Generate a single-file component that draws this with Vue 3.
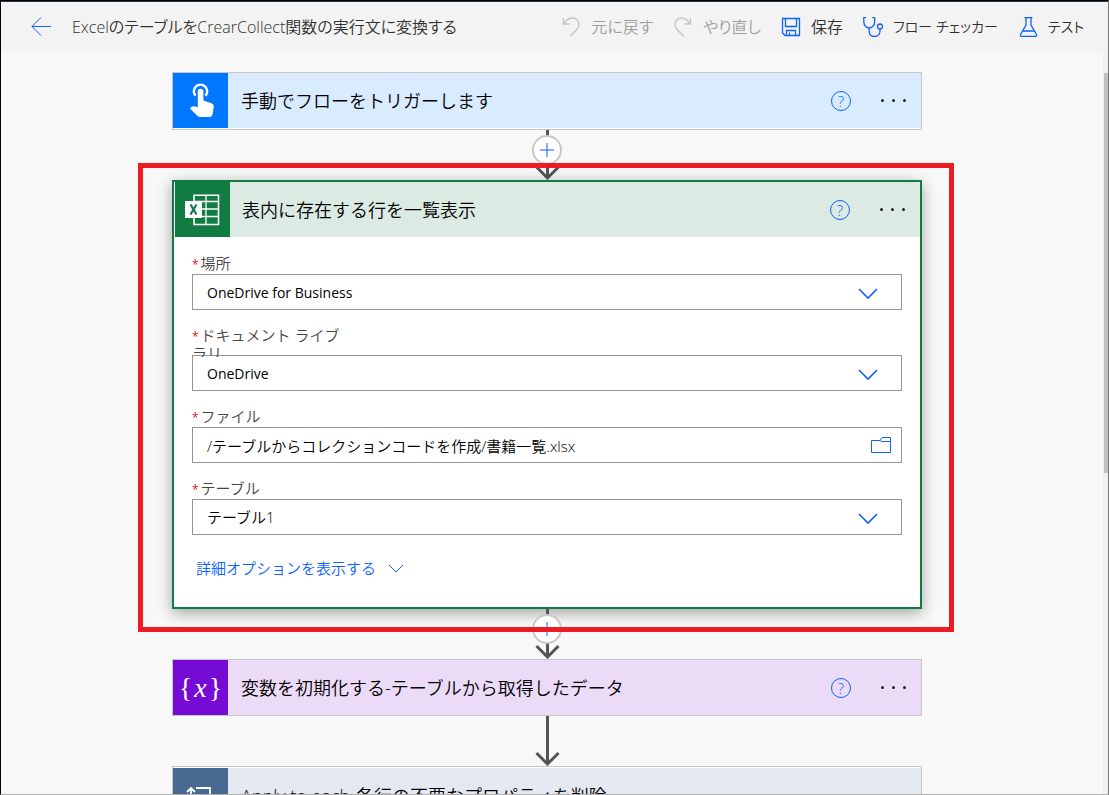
<script setup>
import { ref } from 'vue'

const location = ref('OneDrive for Business')
const library = ref('OneDrive')
const file = ref('/テーブルからコレクションコードを作成/書籍一覧.xlsx')
const table = ref('テーブル1')
</script>

<template>
  <div class="page">
    <header class="topbar">
      <button class="back" type="button" aria-label="戻る">
        <svg width="20" height="20" viewBox="0 0 20 20"><path d="M20 9.500H1M10 .5L1 9.500L10 18.500" /></svg>
      </button>
      <h1 class="title">ExcelのテーブルをCrearCollect関数の実行文に変換する</h1>
      <nav class="tools">
        <button class="tool" type="button" disabled>
          <svg width="20" height="20" viewBox="0 0 20 20"><path d="M2.500 1V7H8.500M2.500 7C5 3 8 1 11.500 1C15.500 1 18 4 18 7.500C18 10.500 16 12.500 14 14.500L9 19.500" /></svg>
          <span>元に戻す</span>
        </button>
        <button class="tool" type="button" disabled>
          <svg width="20" height="20" viewBox="0 0 20 20"><path d="M17.500 1V7H11.500M17.500 7C15 3 12 1 8.500 1C4.500 1 2 4 2 7.500C2 10.500 4 12.500 6 14.500L11 19.500" /></svg>
          <span>やり直し</span>
        </button>
        <button class="tool" type="button">
          <svg width="20" height="20" viewBox="0 0 20 20"><path d="M1.500 1.500H18.500V18.500H4L1.500 16ZM4.500 1.500V9.500H15.500V1.500M5.500 18.500V13.500H14.500V18.500M8.500 18.500V15.500" /></svg>
          <span>保存</span>
        </button>
        <button class="tool kana" type="button">
          <svg width="20" height="20" viewBox="0 0 20 20"><path d="M3 .5H.8V5C.8 8.500 3.500 11 6.200 11S11.600 8.500 11.600 5V.5H9.400M6.200 11V14C6.200 17.500 8.500 19.500 11.500 19.500S17 17.500 17 14V12" /><circle cx="17" cy="9.500" r="2.500" /></svg>
          <span>フロー チェッカー</span>
        </button>
        <button class="tool kana" type="button">
          <svg width="20" height="20" viewBox="0 0 20 20"><path d="M6.500 .7H14.500M8 .7V8L2.500 17.500Q2 19.300 3.500 19.300H17.500Q19 19.300 18.500 17.500L13 8V.7M5 14H16" /></svg>
          <span>テスト</span>
        </button>
      </nav>
    </header>

    <div class="body">
      <main class="canvas">
        <section class="card trigger">
          <div class="card-head">
            <span class="badge">
              <svg width="55" height="55" viewBox="0 0 55 55">
                <path d="M22.500 23.800A6.700 6.700 0 1 1 32.500 23.800" fill="none" stroke="#fff" stroke-width="2.400" transform="translate(0 -1)" />
                <path d="M24.800 18.500A2.800 2.800 0 0 1 30.400 18.500V27.500L38.500 30.200Q41 31.200 40.800 33.500L39.500 41.500Q39 44 36.500 44H27.500Q25.500 44 24 42.500L17 35.500L18.500 33.800Q19.500 33 21 33.300L24.800 34.200Z" fill="#fff" />
              </svg>
            </span>
            <h2>手動でフローをトリガーします</h2>
            <button class="help" type="button" aria-label="ヘルプ">?</button>
            <button class="more" type="button" aria-label="メニュー"><i></i><i></i><i></i></button>
          </div>
        </section>

        <div class="link">
          <svg class="arrow" width="26" height="50" viewBox="0 0 26 50"><path d="M13.500 0V48M2.500 37L13.500 48L24.500 37" /></svg>
          <button class="plus" type="button" aria-label="手順を追加"><svg width="14" height="14" viewBox="0 0 14 14"><path d="M7 0V14M0 7H14" /></svg></button>
        </div>

        <div class="focus">
          <section class="card excel">
            <div class="card-head">
              <span class="badge">
                <svg width="55" height="55" viewBox="0 0 55 55">
                  <g fill="none" stroke="#fff">
                    <path d="M19 13.200H43.500V42.500H19Z" stroke-width="1.600" />
                    <path d="M31 13V42.500M19 19.500H44M19 27H44M19 34.500H44" stroke-width="1.300" />
                  </g>
                  <rect x="10" y="19" width="17" height="17" fill="#fff" />
                  <path d="M15.500 22.500L21.500 32.500M21.500 22.500L15.500 32.500" stroke="#107c41" stroke-width="2.200" />
                </svg>
              </span>
              <h2>表内に存在する行を一覧表示</h2>
              <button class="help" type="button" aria-label="ヘルプ">?</button>
              <button class="more" type="button" aria-label="メニュー"><i></i><i></i><i></i></button>
            </div>
            <form class="form" @submit.prevent>
              <div class="field">
                <label for="location"><b>*</b>場所</label>
                <div class="box">
                  <select id="location" v-model="location" class="latin"><option>OneDrive for Business</option></select>
                  <svg class="caret" width="20" height="12" viewBox="0 0 20 12"><path d="M1 1L10 10L19 1" /></svg>
                </div>
              </div>
              <div class="field">
                <label for="library" class="long"><b>*</b>ドキュメント ライブラリ</label>
                <div class="box">
                  <select id="library" v-model="library" class="latin"><option>OneDrive</option></select>
                  <svg class="caret" width="20" height="12" viewBox="0 0 20 12"><path d="M1 1L10 10L19 1" /></svg>
                </div>
              </div>
              <div class="field">
                <label for="file"><b>*</b>ファイル</label>
                <div class="box">
                  <input id="file" v-model="file" type="text" />
                  <button class="folder" type="button" aria-label="参照">
                    <svg width="20" height="16" viewBox="0 0 20 16"><path d="M.5 3.500H9L11 .5H19.500V15.500H.5ZM9 3.500L10.500 4.500H19.500" /></svg>
                  </button>
                </div>
              </div>
              <div class="field">
                <label for="table"><b>*</b>テーブル</label>
                <div class="box">
                  <select id="table" v-model="table"><option>テーブル1</option></select>
                  <svg class="caret" width="20" height="12" viewBox="0 0 20 12"><path d="M1 1L10 10L19 1" /></svg>
                </div>
              </div>
              <button class="advanced" type="button">
                詳細オプションを表示する
                <svg width="16" height="9" viewBox="0 0 16 9"><path d="M1 1L8 8L15 1" /></svg>
              </button>
            </form>
          </section>

          <div class="link">
            <svg class="arrow" width="26" height="50" viewBox="0 0 26 50"><path d="M13.500 0V48M2.500 37L13.500 48L24.500 37" /></svg>
            <button class="plus" type="button" aria-label="手順を追加"><svg width="14" height="14" viewBox="0 0 14 14"><path d="M7 0V14M0 7H14" /></svg></button>
          </div>
          <div class="highlight"></div>
        </div>

        <section class="card variable">
          <div class="card-head">
            <span class="badge fx">{<em>x</em>}</span>
            <h2>変数を初期化する-テーブルから取得したデータ</h2>
            <button class="help" type="button" aria-label="ヘルプ">?</button>
            <button class="more" type="button" aria-label="メニュー"><i></i><i></i><i></i></button>
          </div>
        </section>

        <div class="link">
          <svg class="arrow" width="26" height="50" viewBox="0 0 26 50"><path d="M13.500 0V48M2.500 37L13.500 48L24.500 37" /></svg>
        </div>

        <section class="card loop">
          <div class="card-head">
            <span class="badge">
              <svg width="55" height="55" viewBox="0 0 55 55"><path d="M18 36V20M14 24L18 20L22 24M23 20H37V36M33 32L37 36L41 32M32 36H18" fill="none" stroke="#fff" stroke-width="1.800" /></svg>
            </span>
            <h2>Apply to each-各行の不要なプロパティを削除</h2>
            <button class="more" type="button" aria-label="メニュー"><i></i><i></i><i></i></button>
          </div>
        </section>
      </main>
      <div class="scrollbar"><div class="thumb"></div></div>
    </div>
  </div>
</template>

<style>
body {
  overflow: hidden;
}
</style>

<style scoped>
* {
  box-sizing: border-box;
}

.page {
  display: flex;
  flex-direction: column;
  height: 100vh;
  overflow: hidden;
  border: 1px solid #000;
  border-right-color: #777;
  border-bottom-color: #b0b0b0;
  background: #f8f8f8;
  color: #000;
  font-family: "Open Sans", "Noto Sans CJK JP", sans-serif;
  font-size: 15px;
  font-weight: 350;
}

button {
  display: flex;
  align-items: center;
  padding: 0;
  border: 0;
  background: none;
  font: inherit;
  color: inherit;
}

h1,
h2 {
  margin: 0;
  font-weight: 350;
  white-space: nowrap;
}

svg {
  flex: none;
}

.topbar {
  display: flex;
  flex: none;
  align-items: center;
  height: 51px;
  padding: 0 24px 0 30px;
  border-top: 1px solid #2b3545;
  background: #f3f3f3;
}

.back svg,
.tool svg,
.folder svg,
.caret,
.advanced svg,
.plus svg {
  fill: none;
  stroke: #0f62fe;
}

.title {
  margin-left: 21px;
  font-size: 16px;
  line-height: 24px;
  color: #323130;
  font-feature-settings: "palt";
}

.tools {
  display: flex;
  gap: 20px;
  margin-left: auto;
}

.tool {
  gap: 10px;
  color: #323130;
  font-size: 16px;
  line-height: 24px;
  white-space: nowrap;
  font-feature-settings: "palt";
}

.kana {
  font-size: 14px;
}

.tool svg {
  stroke-width: 1.300;
}

.tool:disabled {
  color: #a19f9d;
}

.tool:disabled svg {
  stroke: #c4c4c4;
}

.body {
  display: flex;
  flex: 1;
  min-height: 0;
}

.canvas {
  display: flex;
  flex: 1;
  flex-direction: column;
  align-items: center;
  padding: 20px 10px 0 0;
  overflow: hidden;
}

.scrollbar {
  flex: none;
  width: 5px;
  padding: 21px 0 0 1px;
  background: #f0f0f0;
}

.thumb {
  height: 400px;
  background: #c1c1c1;
}

.card {
  flex: none;
  width: 750px;
  border: 1px solid #c8c6c4;
  background: #fff;
}

.card-head {
  display: flex;
  align-items: center;
  height: 55px;
  padding-right: 15px;
}

.card-head h2 {
  flex: 1;
  margin-left: 13px;
  font-size: 18px;
  line-height: 24px;
}

.badge {
  display: flex;
  align-items: center;
  justify-content: center;
  width: 55px;
  height: 55px;
}

.help {
  justify-content: center;
  width: 20px;
  height: 20px;
  border: 1px solid #0f62fe;
  border-radius: 50%;
  color: #0f62fe;
  font-size: 15px;
  line-height: 18px;
}

.more {
  justify-content: space-between;
  width: 25px;
  height: 20px;
  margin-left: 30px;
}

.more i {
  width: 3px;
  height: 3px;
  border-radius: 50%;
  background: #201f1e;
}

.trigger {
  padding-bottom: 1px;
}

.trigger .card-head {
  background: #d9ebff;
}

.trigger .badge {
  background: #0077ff;
}

.excel {
  border: 2px solid #107c41;
  box-shadow: 0 4px 14px rgba(0, 0, 0, 0.35);
}

.excel .card-head {
  margin-left: 1px;
  background: #dbeae2;
}

.excel .card-head h2 {
  margin-left: 12px;
}

.excel .badge {
  background: #107c41;
}

.variable .card-head {
  background: #ebdbf7;
}

.variable .badge {
  background: #770bd6;
}

.fx {
  gap: 2px;
  color: #fff;
  font-family: "Liberation Serif", serif;
  font-size: 28px;
  line-height: 28px;
}

.loop {
  padding-top: 1px;
}

.loop .card-head {
  background: #e4e9f1;
}

.loop .badge {
  background: #486991;
}

.link {
  position: relative;
  display: flex;
  flex: none;
  justify-content: center;
  width: 100%;
  height: 50px;
}

.arrow {
  fill: none;
  stroke: #555;
  stroke-width: 3;
}

.plus {
  position: absolute;
  top: 5px;
  left: calc(50% - 15px);
  justify-content: center;
  width: 30px;
  height: 30px;
  border: 2px solid #c8c8c8;
  border-radius: 50%;
  background: #fff;
}

.focus {
  position: relative;
}

.highlight {
  position: absolute;
  inset: -17px -32px 27px -34px;
  border: 5px solid #ed1c24;
  pointer-events: none;
}

.form {
  padding: 15px 18px 28px;
}

.field {
  margin-bottom: 14px;
}

.field label {
  position: relative;
  z-index: 1;
  display: block;
  width: 150px;
  max-height: 33px;
  padding: 2px 0;
  overflow: hidden;
  color: #484644;
  font-size: 15px;
  line-height: 18px;
  word-break: break-all;
}

.field .long {
  margin-bottom: -2px;
}

.field b {
  margin-right: 2px;
  color: #e81123;
  font-size: 12px;
  font-weight: 400;
  line-height: 12px;
}

.box {
  position: relative;
  display: flex;
  height: 36px;
  border: 1px solid #949494;
  background: #fff;
}

.box select,
.box input {
  flex: 1;
  min-width: 0;
  padding: 0 14px;
  border: 0;
  outline: 0;
  appearance: none;
  background: none;
  color: #000;
  font: inherit;
}

.box .latin {
  font-size: 14px;
  font-weight: 400;
}

.caret {
  position: absolute;
  top: 13px;
  right: 23px;
  stroke-width: 1.600;
  pointer-events: none;
}

.folder {
  padding-right: 10px;
}

.advanced {
  gap: 12px;
  margin: 22px 0 0 4px;
  color: #0f62fe;
  line-height: 22px;
}
</style>
